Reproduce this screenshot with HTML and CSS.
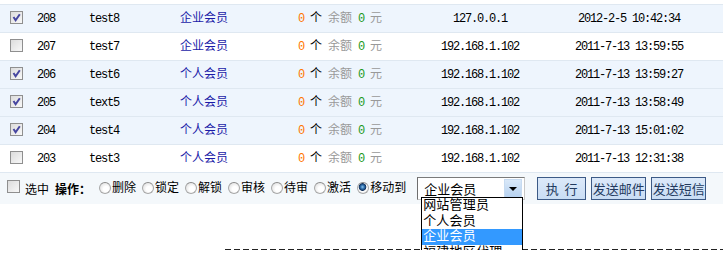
FILE: index.html
```html
<!DOCTYPE html>
<html>
	<head>
		<meta charset="utf-8">
		<title>会员管理</title>
		<link rel="stylesheet" href="styles.css">
	</head>
	<body>
		<table class="list">
			<tr class="on">
				<td class="ck"><input type="checkbox" checked></td>
				<td class="id"><span class="a">208</span></td>
				<td class="user"><span class="a">test8</span></td>
				<td class="type"><a href="#">企业会员</a></td>
				<td class="cnt"><span class="a or">0 </span>个<span class="a"> </span><em>余额</em><span class="a gr"> 0 </span><em>元</em></td>
				<td class="ip"><span class="a">127.0.0.1</span></td>
				<td class="time"><span class="a">2012-2-5 10:42:34</span></td>
			</tr>
			<tr>
				<td class="ck"><input type="checkbox"></td>
				<td class="id"><span class="a">207</span></td>
				<td class="user"><span class="a">test7</span></td>
				<td class="type"><a href="#">企业会员</a></td>
				<td class="cnt"><span class="a or">0 </span>个<span class="a"> </span><em>余额</em><span class="a gr"> 0 </span><em>元</em></td>
				<td class="ip"><span class="a">192.168.1.102</span></td>
				<td class="time"><span class="a">2011-7-13 13:59:55</span></td>
			</tr>
			<tr class="on">
				<td class="ck"><input type="checkbox" checked></td>
				<td class="id"><span class="a">206</span></td>
				<td class="user"><span class="a">test6</span></td>
				<td class="type"><a href="#">个人会员</a></td>
				<td class="cnt"><span class="a or">0 </span>个<span class="a"> </span><em>余额</em><span class="a gr"> 0 </span><em>元</em></td>
				<td class="ip"><span class="a">192.168.1.102</span></td>
				<td class="time"><span class="a">2011-7-13 13:59:27</span></td>
			</tr>
			<tr class="on">
				<td class="ck"><input type="checkbox" checked></td>
				<td class="id"><span class="a">205</span></td>
				<td class="user"><span class="a">text5</span></td>
				<td class="type"><a href="#">个人会员</a></td>
				<td class="cnt"><span class="a or">0 </span>个<span class="a"> </span><em>余额</em><span class="a gr"> 0 </span><em>元</em></td>
				<td class="ip"><span class="a">192.168.1.102</span></td>
				<td class="time"><span class="a">2011-7-13 13:58:49</span></td>
			</tr>
			<tr class="on">
				<td class="ck"><input type="checkbox" checked></td>
				<td class="id"><span class="a">204</span></td>
				<td class="user"><span class="a">test4</span></td>
				<td class="type"><a href="#">个人会员</a></td>
				<td class="cnt"><span class="a or">0 </span>个<span class="a"> </span><em>余额</em><span class="a gr"> 0 </span><em>元</em></td>
				<td class="ip"><span class="a">192.168.1.102</span></td>
				<td class="time"><span class="a">2011-7-13 15:01:02</span></td>
			</tr>
			<tr>
				<td class="ck"><input type="checkbox"></td>
				<td class="id"><span class="a">203</span></td>
				<td class="user"><span class="a">test3</span></td>
				<td class="type"><a href="#">个人会员</a></td>
				<td class="cnt"><span class="a or">0 </span>个<span class="a"> </span><em>余额</em><span class="a gr"> 0 </span><em>元</em></td>
				<td class="ip"><span class="a">192.168.1.102</span></td>
				<td class="time"><span class="a">2011-7-13 12:31:38</span></td>
			</tr>
		</table>
		<div class="ops">
			<input type="checkbox" class="all">
			<span class="sel">选中</span>
			<b>操作：</b>
			<label><input type="radio" name="op">删除</label>
			<label><input type="radio" name="op">锁定</label>
			<label><input type="radio" name="op">解锁</label>
			<label><input type="radio" name="op">审核</label>
			<label><input type="radio" name="op">待审</label>
			<label><input type="radio" name="op">激活</label>
			<label><input type="radio" name="op" checked>移动到</label>
			<div class="select">
				<span class="val">企业会员</span>
				<span class="arrow"></span>
				<ul class="drop">
					<li>网站管理员</li>
					<li>个人会员</li>
					<li class="hover">企业会员</li>
					<li>福建地区代理</li>
				</ul>
			</div>
			<button class="btn run">执 行</button>
			<button class="btn">发送邮件</button>
			<button class="btn">发送短信</button>
		</div>
		<div class="foot"></div>
	</body>
</html>
```

FILE: styles.css
```css
* {
	margin: 0;
	padding: 0;
}

html {
	overflow: hidden;
}

body {
	width: 723px;
	font-family: "Liberation Mono", "Noto Sans CJK SC", monospace;
	font-size: 12px;
	color: #000;
	background: #fff;
}

/* 半角字符 6px 宽 */
.a {
	letter-spacing: -1.2px;
}

.list {
	width: 723px;
	border-collapse: collapse;
	border-top: 1px solid #dfe8f1;
	margin-top: 4px;
}
.list td {
	height: 27px;
	border-bottom: 1px solid #dfe8f1;
	line-height: 16px;
	padding: 0;
	white-space: nowrap;
}
.list tr.on td {
	background: #eef5fd;
}
.list .ck {
	width: 32px;
	text-align: center;
}
.list .id {
	width: 52px;
	padding-left: 5px;
}
.list .user {
	width: 91px;
}
.list .type {
	width: 118px;
}
.list .type a {
	color: #1b1ba8;
	text-decoration: none;
}
.list .cnt {
	width: 122px;
}
.list .cnt em {
	font-style: normal;
	color: #999;
}
.or {
	color: #f70;
}
.gr {
	color: #1c9a1c;
}
.list .ip {
	width: 120px;
	text-align: center;
}
.list .time {
	text-align: center;
	padding-right: 5px;
}

/* 复选框 */
input[type=checkbox] {
	-webkit-appearance: none;
	appearance: none;
	width: 13px;
	height: 13px;
	border: 1px solid #8f8f8f;
	background: linear-gradient(135deg, #dcdcdc, #f8f8f8);
	vertical-align: middle;
	display: inline-block;
	margin-top: -2px;
}
input[type=checkbox]:checked {
	background: url("data:image/svg+xml,%3Csvg xmlns='http://www.w3.org/2000/svg' width='11' height='11'%3E%3Cpath d='M2.5 5 L4.6 8.2 L8.8 2.2' fill='none' stroke='%234646a0' stroke-width='2'/%3E%3C/svg%3E") no-repeat center, linear-gradient(135deg, #dcdcdc, #f8f8f8);
}

/* 单选框 */
input[type=radio] {
	-webkit-appearance: none;
	appearance: none;
	width: 12px;
	height: 12px;
	border-radius: 50%;
	border: 1px solid #a8a8a8;
	border-top-color: #8a8a8a;
	background: radial-gradient(circle at 60% 60%, #fff 30%, #d6d6d6);
	vertical-align: top;
	margin-top: 1px;
	margin-right: 1px;
	flex: none;
}
input[type=radio]:checked {
	background: radial-gradient(circle at 45% 40%, #8ec6ee 0, #2a6aa8 2px, #12305a 3.5px, #fff 4.2px, #fff 30%, #d6d6d6);
}

/* 操作栏 */
.ops {
	position: relative;
	z-index: 1;
	height: 31px;
	background: #f4f8fb;
	display: flex;
	align-items: center;
	padding-left: 7px;
}
.ops .all {
	margin-top: -5px;
}
.ops .sel {
	margin-left: 5px;
}
.ops b {
	margin-left: 6px;
	margin-right: 8px;
}
.ops label {
	display: flex;
	align-items: flex-start;
	margin-right: 6px;
	line-height: 16px;
}

.select {
	position: relative;
	width: 108px;
	height: 23px;
	box-sizing: border-box;
	border: 1px solid #6e6e6e;
	border-color: #7a7a7a #c8c8c8 #c8c8c8 #6e6e6e;
	background: #fff;
	margin-left: 5px;
	font-size: 13px;
	display: flex;
	align-items: center;
}
.select .val {
	padding-left: 6px;
	flex: 1;
}
.select .arrow {
	width: 16px;
	height: 17px;
	margin-right: 2px;
	background: linear-gradient(#d9e8f8, #b7d2f0);
	border: 1px solid #c7dbf1;
	position: relative;
}
.select .arrow::after {
	content: '';
	position: absolute;
	left: 4px;
	top: 7px;
	border-left: 4px solid transparent;
	border-right: 4px solid transparent;
	border-top: 4px solid #000;
}
.drop {
	list-style: none;
	position: absolute;
	left: 3px;
	top: 19px;
	width: 100px;
	border: 1px solid #000;
	border-bottom: none;
	background: #fff;
	font-size: 13px;
	letter-spacing: 0.2px;
	line-height: 15.5px;
	z-index: 2;
}
.drop li {
	padding-left: 1px;
	height: 15.5px;
}
.drop li.hover {
	background: #3399ff;
	color: #fff;
}

.btn {
	font-family: "Noto Sans CJK SC", sans-serif;
	font-size: 13px;
	width: 55px;
	height: 23px;
	line-height: 19px;
	padding: 0;
	background: linear-gradient(#dce9f9, #c9ddf4);
	border: 1px solid #3c5a86;
	color: #233a5e;
	margin-left: 5px;
}
.btn.run {
	width: 49px;
	margin-left: 12px;
	word-spacing: 3px;
}

.foot {
	margin: 45px 0 0 225px;
	height: 1px;
	background: repeating-linear-gradient(90deg, #222 0, #222 6px, transparent 6px, transparent 9px);
}
```
